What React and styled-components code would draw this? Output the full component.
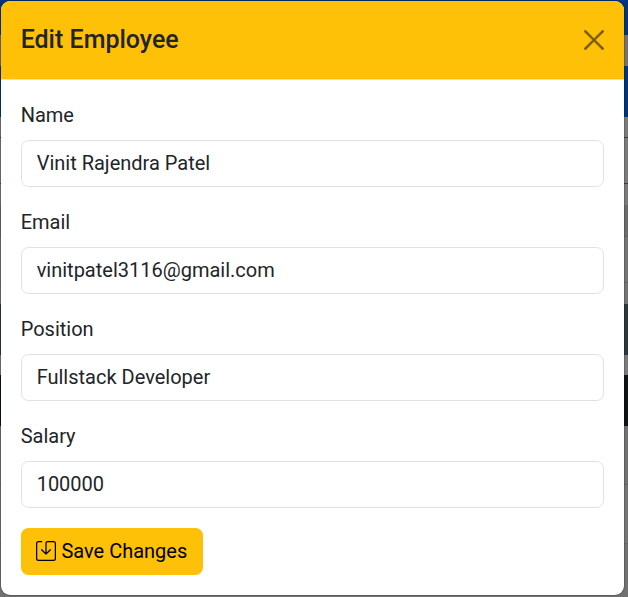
import React, { useState } from "react";
import styled, { createGlobalStyle } from "styled-components";

const GlobalStyle = createGlobalStyle`
  *, *::before, *::after { box-sizing: border-box; }
  body {
    margin: 0;
    overflow: hidden;
    font-family: Roboto, "Liberation Sans", sans-serif;
    font-size: 20px;
    line-height: 30px;
    color: #212529;
  }
`;

/* The dimmed page stays visible as thin bands around the dialog. */
const Backdrop = styled.main`
  width: 628px;
  height: 597px;
  background: linear-gradient(
    #00347c 0 35px,
    #727272 35px 66px,
    #00347c 66px 117px,
    #7b7b7b 117px 137px,
    #6b2732 137px 138px,
    #7b7b7b 138px 183px,
    #6b2732 183px 184px,
    #7b7b7b 184px 205px,
    #6c6c6c 205px 236px,
    #626262 236px 237px,
    #747474 237px 282px,
    #656565 282px 283px,
    #747474 283px 304px,
    #2f373b 304px 355px,
    #7b7b7b 355px 375px,
    #101315 375px 426px,
    #717171 426px 484px,
    #666666 484px 485px,
    #757575 485px 543px,
    #666666 543px 544px,
    #717171 544px
  );
`;

const Dialog = styled.section`
  width: 625px;
  height: 596px;
  display: flex;
  flex-direction: column;
  background: #fff;
  background-clip: padding-box;
  border: 1px solid rgba(0, 0, 0, 0.175);
  border-radius: 10px;
  overflow: hidden;
`;

const Header = styled.header`
  display: flex;
  align-items: center;
  justify-content: space-between;
  height: 79px;
  flex: none;
  padding: 0 20px 0 19.65px;
  background: #ffc107;
  border-bottom: 1px solid #dee2e6;
`;

const Title = styled.h5`
  margin: 0;
  font-size: 25px;
  font-weight: 500;
  line-height: 38px;
`;

const CloseButton = styled.button`
  display: flex;
  padding: 0;
  border: 0;
  background: none;
  color: #000;
  opacity: 0.5;
  cursor: pointer;
`;

const Form = styled.form`
  padding: 20px 19px 20px 20px;
`;

const Field = styled.div`
  display: flex;
  flex-direction: column;
  gap: 10px;
  margin-bottom: 20px;
`;

const Label = styled.label`
  display: block;
  margin-left: -0.35px;
`;

const Input = styled.input`
  width: 583px;
  height: 47px;
  padding: 0 15px 2px 14.65px;
  border: 1px solid #dee2e6;
  border-radius: 7.5px;
  background: #fff;
  color: #212529;
  font: inherit;
  outline: none;
`;

const SaveButton = styled.button`
  display: flex;
  align-items: center;
  gap: 5px;
  width: 182px;
  height: 47px;
  padding: 0 14px 1px 15.4px;
  border: 0;
  border-radius: 7.5px;
  background: #ffc107;
  color: #000;
  font: inherit;
  white-space: nowrap;
  cursor: pointer;
`;

const Icon = styled.svg`
  display: block;
  flex: none;
  width: ${({ $size }) => $size}px;
  height: ${({ $size }) => $size}px;
  fill: currentColor;
`;

const fields = [
  { id: "name", label: "Name" },
  { id: "email", label: "Email" },
  { id: "position", label: "Position" },
  { id: "salary", label: "Salary" },
];

export default function App() {
  const [employee, setEmployee] = useState({
    name: "Vinit Rajendra Patel",
    email: "vinitpatel3116@gmail.com",
    position: "Fullstack Developer",
    salary: "100000",
  });

  return (
    <>
      <GlobalStyle />
      <Backdrop>
        <Dialog role="dialog" aria-labelledby="dialog-title">
          <Header>
            <Title id="dialog-title">Edit Employee</Title>
            <CloseButton type="button" aria-label="Close">
              <Icon $size={20} viewBox="0 0 16 16">
                <path d="M.293.293a1 1 0 0 1 1.414 0L8 6.586 14.293.293a1 1 0 1 1 1.414 1.414L9.414 8l6.293 6.293a1 1 0 0 1-1.414 1.414L8 9.414l-6.293 6.293a1 1 0 0 1-1.414-1.414L6.586 8 .293 1.707a1 1 0 0 1 0-1.414z" />
              </Icon>
            </CloseButton>
          </Header>
          <Form onSubmit={(e) => e.preventDefault()}>
            {fields.map(({ id, label }) => (
              <Field key={id}>
                <Label htmlFor={id}>{label}</Label>
                <Input
                  id={id}
                  spellCheck={false}
                  value={employee[id]}
                  onChange={(e) => setEmployee({ ...employee, [id]: e.target.value })}
                />
              </Field>
            ))}
            <SaveButton type="submit">
              <Icon $size={20} viewBox="0 0 16 16" overflow="visible">
                <path d="M2 1a1 1 0 0 0-1 1v12a1 1 0 0 0 1 1h12a1 1 0 0 0 1-1V2a1 1 0 0 0-1-1H9.5a1 1 0 0 0-1 1v7.293l2.646-2.647a.5.5 0 0 1 .708.708l-3.5 3.5a.5.5 0 0 1-.708 0l-3.5-3.5a.5.5 0 1 1 .708-.708L7.5 9.293V2a2 2 0 0 1 2-2H14a2 2 0 0 1 2 2v12a2 2 0 0 1-2 2H2a2 2 0 0 1-2-2V2a2 2 0 0 1 2-2h2.5a.5.5 0 0 1 0 1z" />
              </Icon>
              Save Changes
            </SaveButton>
          </Form>
        </Dialog>
      </Backdrop>
    </>
  );
}
